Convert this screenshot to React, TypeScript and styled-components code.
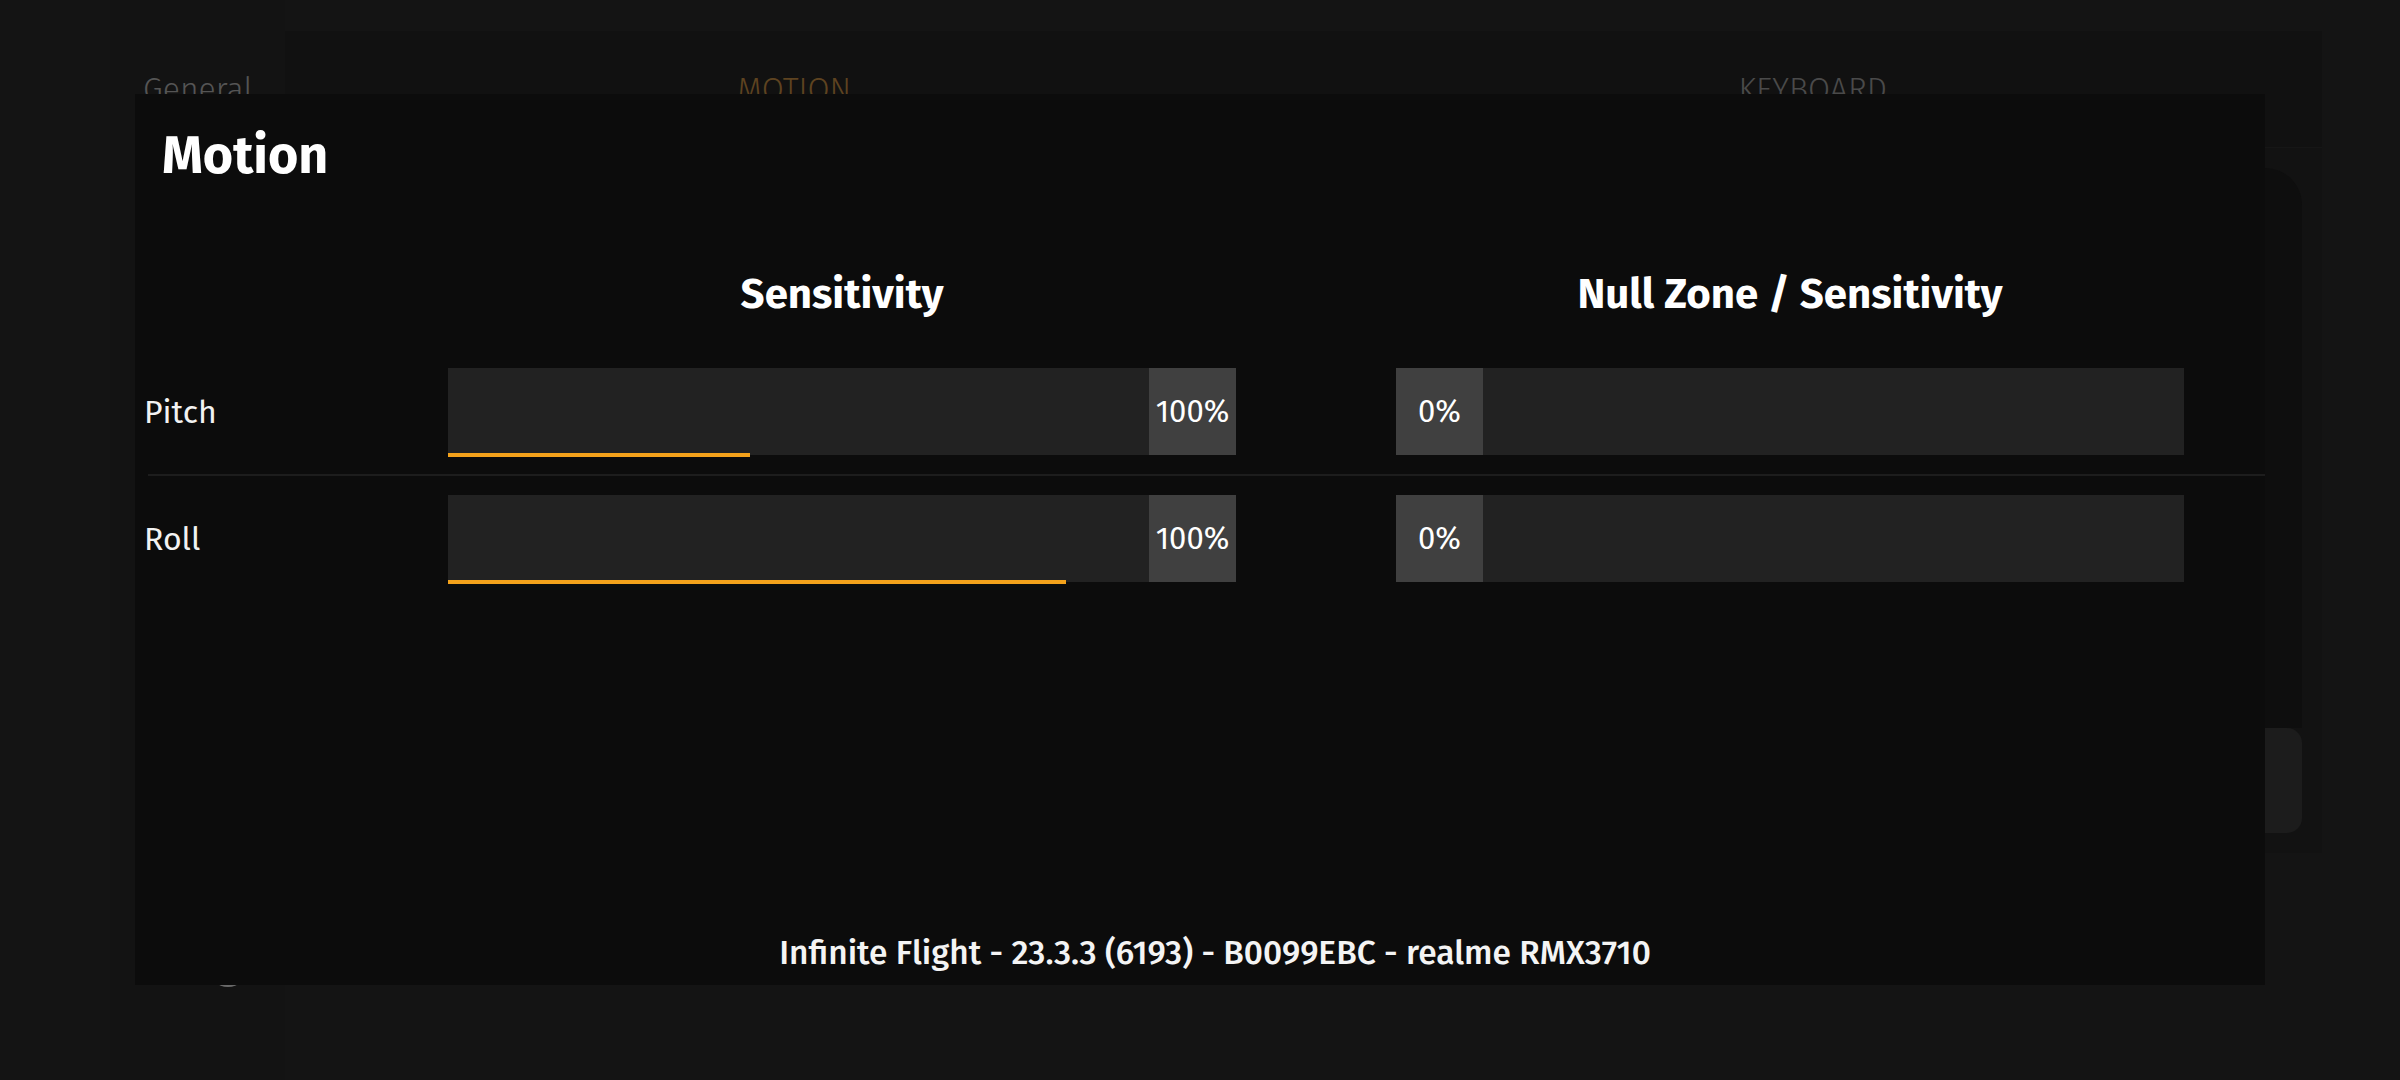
import React from "react";
import styled, { createGlobalStyle } from "styled-components";

const GlobalStyle = createGlobalStyle`
  html, body {
    margin: 0;
    padding: 0;
    background: #141414;
  }
  * {
    box-sizing: border-box;
  }
`;

const FONT = `"Fira Sans", Roboto, "Noto Sans", sans-serif`;

const Screen = styled.div`
  position: relative;
  width: 2400px;
  height: 1080px;
  overflow: hidden;
  background: #141414;
  font-family: ${FONT};
  color: #fff;
`;

/* ---------- settings page behind the dialog ---------- */

const Backdrop = styled.div`
  display: flex;
  height: 100%;
  padding-left: 110px;
`;

const Sidebar = styled.div`
  width: 175px;
  display: flex;
  flex-direction: column;
  padding: 70px 0 93px 33px;
  background: #131313;
`;

const SideItem = styled.div`
  font-size: 32px;
  line-height: 38px;
  font-weight: 300;
  color: #555;
`;

const SideAvatar = styled.div`
  margin-top: auto;
  margin-left: 65px;
  width: 40px;
  height: 40px;
  border-radius: 50%;
  background: #6a6a6a;
`;

const Panel = styled.div`
  margin-top: 31px;
  width: 2037px;
  height: 822px;
  display: flex;
  flex-direction: column;
  background: #111111;
`;

const TabBar = styled.div`
  height: 117px;
  display: grid;
  grid-template-columns: 1fr 1fr;
  padding-top: 39px;
  border-bottom: 1px solid #161616;
`;

const Tab = styled.div<{ $active?: boolean }>`
  text-align: center;
  font-size: 32px;
  line-height: 38px;
  font-weight: 300;
  color: ${(p) => (p.$active ? "#5e4320" : "#4a4a4a")};
`;

const PanelBody = styled.div`
  flex: 1;
  display: flex;
  flex-direction: column;
  padding: 20px 20px 20px 0;
  background: #121212;
`;

const ContentCard = styled.div`
  flex: 1;
  background: #0e0e0e;
  border-top-right-radius: 37px;
`;

const BottomButton = styled.div`
  height: 105px;
  background: #1c1c1c;
  border-radius: 0 15px 15px 0;
`;

/* ---------- motion dialog ---------- */

const Dialog = styled.div`
  position: absolute;
  left: 135px;
  top: 94px;
  width: 2130px;
  height: 891px;
  display: flex;
  flex-direction: column;
  padding: 31px 0 11px 0;
  background: #0c0c0c;
`;

const Title = styled.h1`
  margin: 0 0 83px 27px;
  font-size: 52px;
  line-height: 62px;
  font-weight: 700;
  color: #fff;
`;

const Grid = styled.div`
  display: grid;
  grid-template-columns: 304px 788px 160px 788px;
  margin-left: 9px;
`;

const HeaderRow = styled(Grid)`
  margin-bottom: 30px;
`;

const ColumnTitle = styled.div<{ $col: number }>`
  grid-column: ${(p) => p.$col};
  text-align: center;
  font-size: 42px;
  line-height: 49px;
  font-weight: 700;
`;

const Row = styled(Grid)<{ $divider?: boolean }>`
  position: relative;
  padding: 19px 0 21px;

  &::after {
    content: "";
    position: absolute;
    left: 4px;
    right: 0;
    bottom: 0;
    height: 2px;
    background: ${(p) => (p.$divider ? "#1d1d1d" : "transparent")};
  }
`;

const Label = styled.div`
  display: flex;
  align-items: center;
  font-size: 32px;
  font-weight: 400;
  color: #f2f2f2;
`;

const Bar = styled.div<{ $col: number }>`
  grid-column: ${(p) => p.$col};
  position: relative;
  height: 87px;
  display: flex;
  background: #222222;
`;

const Track = styled.div`
  flex: 1;
`;

const Value = styled.div`
  width: 87px;
  display: flex;
  align-items: center;
  justify-content: center;
  background: #404040;
  font-size: 31px;
  font-weight: 400;
  color: #fff;
`;

const Fill = styled.div`
  position: absolute;
  left: 0;
  bottom: -2px;
  height: 4px;
  background: #f4a21b;
`;

const Footer = styled.div`
  margin-top: auto;
  padding-left: 30px;
  text-align: center;
  font-size: 33.5px;
  line-height: 42px;
  font-weight: 500;
  color: #f4f4f4;
`;

type Axis = {
  name: string;
  sensitivity: number;
  fill: number;
  nullZone: number;
};

const axes: Axis[] = [
  { name: "Pitch", sensitivity: 100, fill: 38.3, nullZone: 0 },
  { name: "Roll", sensitivity: 100, fill: 78.4, nullZone: 0 },
];

const App = () => {
  return (
    <Screen>
      <GlobalStyle />
      <Backdrop>
        <Sidebar>
          <SideItem>General</SideItem>
          <SideAvatar />
        </Sidebar>
        <Panel>
          <TabBar>
            <Tab $active>MOTION</Tab>
            <Tab>KEYBOARD</Tab>
          </TabBar>
          <PanelBody>
            <ContentCard />
            <BottomButton />
          </PanelBody>
        </Panel>
      </Backdrop>

      <Dialog>
        <Title>Motion</Title>
        <HeaderRow>
          <ColumnTitle $col={2}>Sensitivity</ColumnTitle>
          <ColumnTitle $col={4}>Null Zone / Sensitivity</ColumnTitle>
        </HeaderRow>
        {axes.map((axis, index) => (
          <Row key={axis.name} $divider={index < axes.length - 1}>
            <Label>{axis.name}</Label>
            <Bar $col={2}>
              <Track />
              <Value>{axis.sensitivity}%</Value>
              <Fill style={{ width: `${axis.fill}%` }} />
            </Bar>
            <Bar $col={4}>
              <Value>{axis.nullZone}%</Value>
              <Track />
            </Bar>
          </Row>
        ))}
        <Footer>Infinite Flight - 23.3.3 (6193) - B0099EBC - realme RMX3710</Footer>
      </Dialog>
    </Screen>
  );
};

export default App;
